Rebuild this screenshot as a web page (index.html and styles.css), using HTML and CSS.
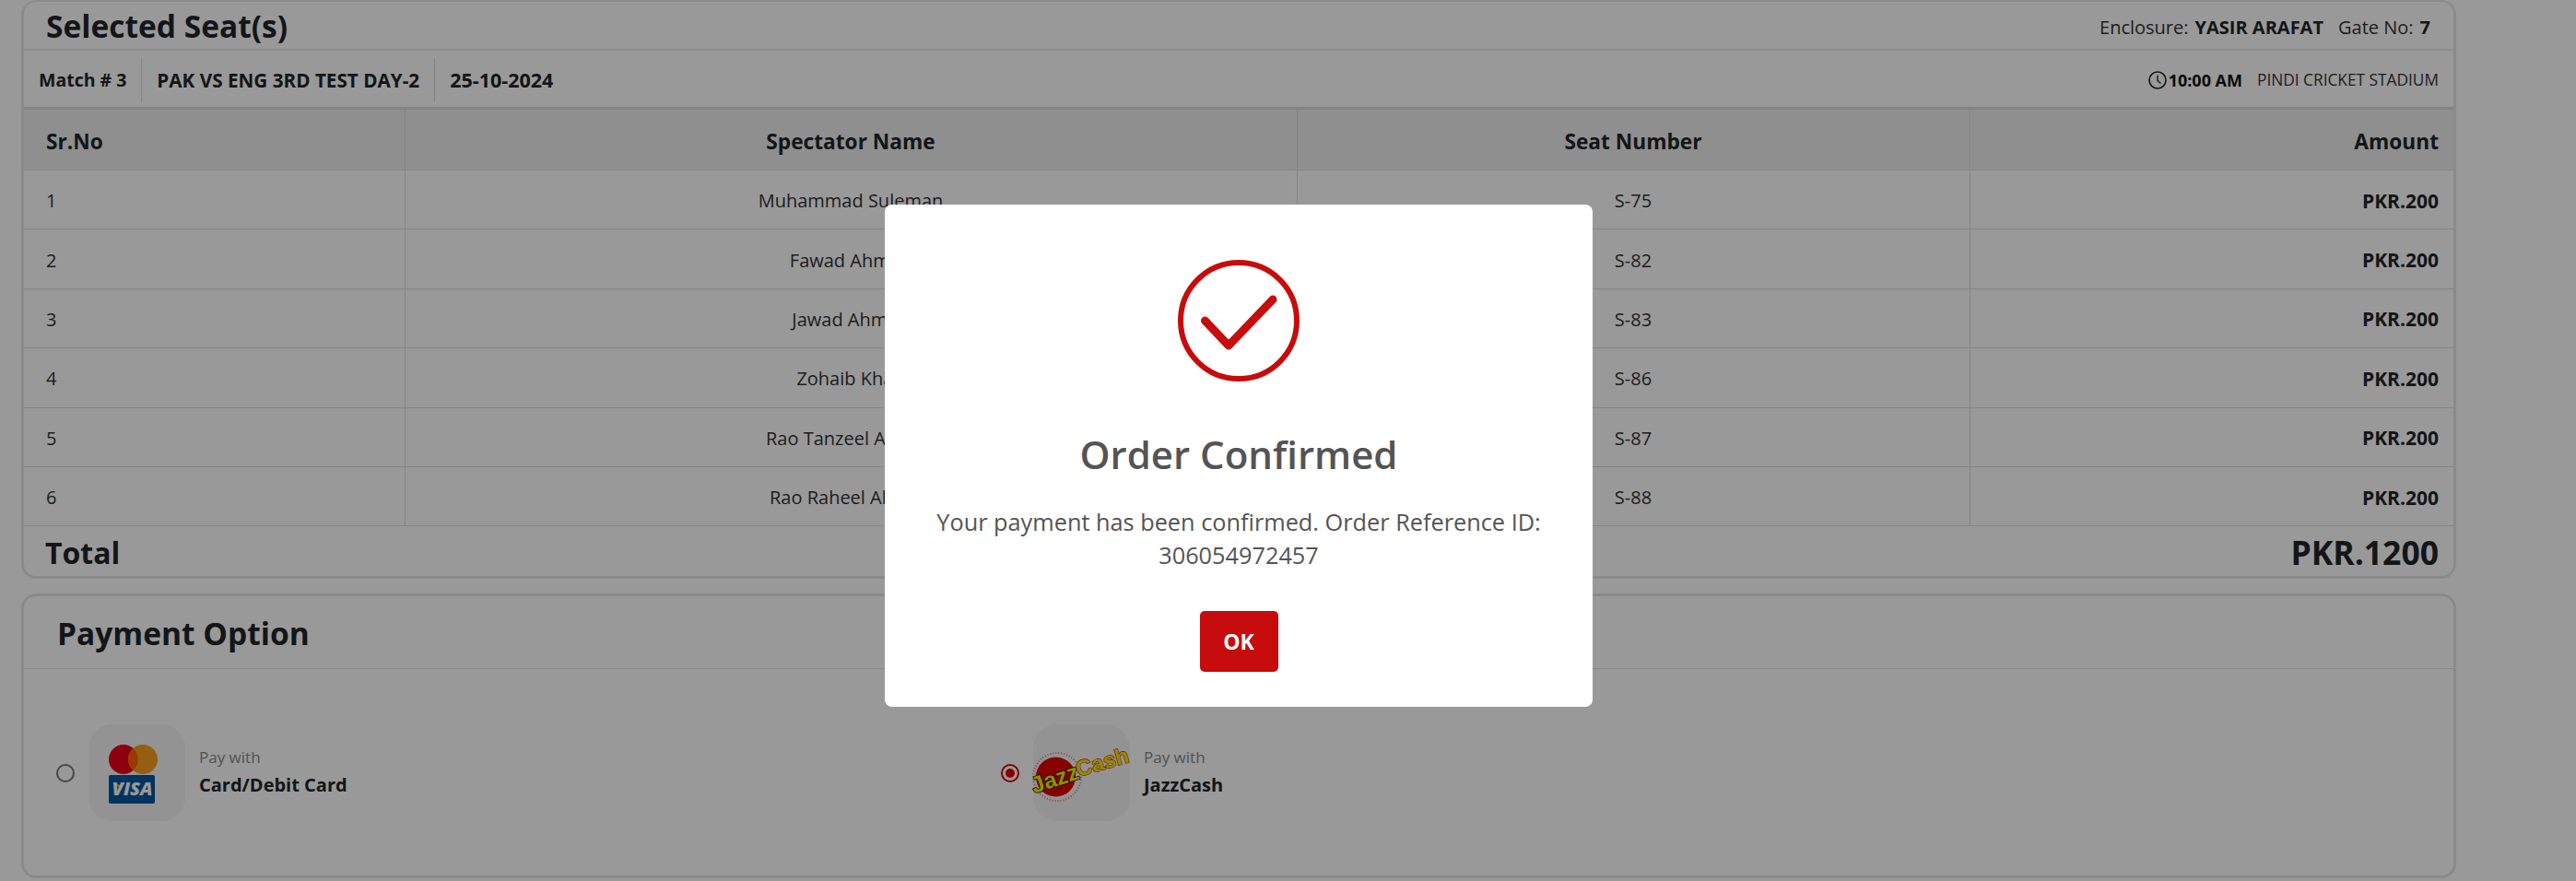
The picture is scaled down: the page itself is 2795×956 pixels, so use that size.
FILE: index.html
```html
<!DOCTYPE html>
<html lang="en">
<head>
<meta charset="utf-8">
<title>Order Confirmed</title>
<link rel="stylesheet" href="styles.css">
</head>
<body>
<main class="page">
  <section class="card seats">
    <header class="seats-head">
      <h2 class="title">Selected Seat(s)</h2>
      <div class="enclosure"><span>Enclosure:</span> <b class="enc-name">YASIR ARAFAT</b><span class="gate">Gate No:</span> <b>7</b></div>
    </header>
    <div class="match-bar">
      <div class="match-left">
        <span class="match-item first">Match # 3</span>
        <span class="match-item">PAK VS ENG 3RD TEST DAY-2</span>
        <span class="match-item last">25-10-2024</span>
      </div>
      <div class="match-right">
        <svg class="clock" viewBox="0 0 20 20" width="20" height="20"><circle cx="10" cy="10" r="9" fill="none" stroke="#222" stroke-width="1.6"/><path d="M10 4.500V10.500L13.500 13.500" fill="none" stroke="#222" stroke-width="1.4"/></svg>
        <b class="time">10:00 AM</b>
        <span class="venue">PINDI CRICKET STADIUM</span>
      </div>
    </div>
    <table class="seat-table">
      <colgroup><col class="c1"><col class="c2"><col class="c3"><col class="c4"></colgroup>
      <thead>
        <tr><th class="left">Sr.No</th><th>Spectator Name</th><th>Seat Number</th><th class="right">Amount</th></tr>
      </thead>
      <tbody>
        <tr><td class="left">1</td><td>Muhammad Suleman</td><td>S-75</td><td class="right amt">PKR.200</td></tr>
        <tr><td class="left">2</td><td>Fawad Ahmed</td><td>S-82</td><td class="right amt">PKR.200</td></tr>
        <tr><td class="left">3</td><td>Jawad Ahmed</td><td>S-83</td><td class="right amt">PKR.200</td></tr>
        <tr><td class="left">4</td><td>Zohaib Khan</td><td>S-86</td><td class="right amt">PKR.200</td></tr>
        <tr><td class="left">5</td><td>Rao Tanzeel Ahmed</td><td>S-87</td><td class="right amt">PKR.200</td></tr>
        <tr><td class="left">6</td><td>Rao Raheel Ahmed</td><td>S-88</td><td class="right amt">PKR.200</td></tr>
      </tbody>
    </table>
    <div class="total"><span class="total-label">Total</span><span class="total-amt">PKR.1200</span></div>
  </section>

  <section class="card payment">
    <h2 class="pay-title">Payment Option</h2>
    <div class="pay-options">
      <label class="option">
        <span class="radio"></span>
        <span class="tile">
          <svg viewBox="0 0 105 105" width="105" height="105">
            <circle cx="38" cy="38" r="16" fill="#eb001b"/>
            <circle cx="59" cy="38" r="16" fill="#f79e1b"/>
            <path d="M48.500 26a16 16 0 0 1 0 24a16 16 0 0 1 0-24z" fill="#ff5f00"/>
            <rect x="22" y="55" width="50" height="31" rx="2" fill="#00579f"/>
            <path d="M27 64l6 1 2 5z" fill="#faa61a"/>
            <text x="47.500" y="77" class="visa" text-anchor="middle">VISA</text>
          </svg>
        </span>
        <span class="opt-text"><span class="pay-with">Pay with</span><b class="opt-name">Card/Debit Card</b></span>
      </label>
      <label class="option">
        <span class="radio on"></span>
        <span class="tile">
          <svg viewBox="0 0 105 105" width="105" height="105">
            <circle cx="26" cy="57" r="26" fill="none" stroke="#ee1c25" stroke-width="2" stroke-dasharray="1 2" opacity=".6"/>
            <circle cx="24.500" cy="57" r="21.500" fill="#e00000"/>
            <text x="0" y="0" class="jazz" transform="translate(1 75) rotate(-18)">Jazz</text>
            <text x="0" y="0" class="cash" transform="translate(49 57) rotate(-16)">Cash</text>
          </svg>
        </span>
        <span class="opt-text"><span class="pay-with">Pay with</span><b class="opt-name">JazzCash</b></span>
      </label>
    </div>
  </section>
</main>

<div class="overlay">
  <div class="modal" role="dialog">
    <svg class="check" viewBox="0 0 132 132" width="132" height="132">
      <circle cx="66" cy="66" r="63" fill="none" stroke="#c60c0c" stroke-width="6"/>
      <path d="M29.500 66L55 93L103 43" fill="none" stroke="#c60c0c" stroke-width="9" stroke-linecap="round" stroke-linejoin="round"/>
    </svg>
    <h1 class="modal-title">Order Confirmed</h1>
    <p class="modal-text">Your payment has been confirmed. Order Reference ID: 306054972457</p>
    <button class="ok" type="button">OK</button>
  </div>
</div>
</body>
</html>
```

FILE: styles.css
```css
* { box-sizing: border-box; }
html, body { margin: 0; padding: 0; height: 956px; overflow: hidden; }
body { background: #fff; font-family: "Open Sans", "Noto Sans", sans-serif; color: #212529; }

.page { width: 2688px; padding: 0 23px; display: flex; flex-direction: column; gap: 16px; }
.card { border: 3px solid #e6e7ea; border-radius: 16px; }
.seats { height: 628px; border-top-width: 2px; display: flex; flex-direction: column; overflow: hidden; }
.payment { height: 309px; }

.seats-head { height: 53px; display: flex; justify-content: space-between; align-items: center; padding: 3px 25px 0 24px; border-bottom: 2px solid #ececec; }
.title { margin: 0; font-size: 33.500px; font-weight: 700; line-height: 1; }
.enclosure { font-size: 20px; color: #333; display: flex; gap: 7px; }
.enclosure b { font-weight: 700; color: #212529; }
.gate { margin-left: 9px; }

.match-bar { height: 64px; display: flex; justify-content: space-between; align-items: center; padding: 2px 16px 0; border-bottom: 3px solid #dcdcdc; }
.match-left { display: flex; align-items: center; }
.match-item { font-size: 20.700px; font-weight: 700; padding: 11px 16px; line-height: 24px; border-right: 1px solid #dcdcdc; }
.match-item.first { padding-left: 0; font-size: 19.500px; }
.match-item.last { border-right: 0; font-size: 21.500px; }
.match-right { display: flex; align-items: center; font-size: 18px; }
.clock { margin-right: 2px; }
.time { font-weight: 700; color: #111; }
.venue { margin-left: 16px; color: #333; font-size: 17.300px; }

.seat-table { width: 100%; border-collapse: collapse; table-layout: fixed; font-size: 20px; }
.c1 { width: 413px; }
.c2 { width: 968px; }
.c3 { width: 730px; }
.seat-table th { height: 65.500px; background: #eee; font-size: 22.700px; font-weight: 700; border: 1px solid #dedede; border-top: 0; padding: 3px 16px 0; text-align: center; }
.seat-table td { height: 64.400px; border: 1px solid #dedede; padding: 2px 16px 0; text-align: center; color: #333; }
.seat-table tr > :first-child { border-left: 0; }
.seat-table tr > :last-child { border-right: 0; }
.seat-table .left { text-align: left; padding-left: 24px; }
.seat-table .right { text-align: right; padding-right: 16px; }
.seat-table .amt { font-weight: 700; font-size: 21px; color: #212529; }

.total { flex: 1; display: flex; justify-content: space-between; align-items: center; padding: 4px 16px 0 23px; font-weight: 700; line-height: 1; }
.total-label { font-size: 32px; }
.total-amt { font-size: 35.500px; }

.pay-title { margin: 0; height: 79px; padding: 2px 36px 0; display: flex; align-items: center; font-size: 33.500px; font-weight: 700; border-bottom: 1px solid #e3e3e3; }
.pay-options { display: grid; grid-template-columns: 1025px 1fr; padding: 60px 35px 0; }
.option { display: flex; align-items: center; }
.radio { width: 20px; height: 20px; border: 2px solid #777; border-radius: 50%; margin-right: 15px; background: #fff; position: relative; }
.radio.on { border-color: #d00; }
.radio.on::after { content: ""; position: absolute; inset: 3px; border-radius: 50%; background: #d00; }
.tile { width: 105px; height: 105px; border-radius: 26px; background: #f5f5f5; display: block; margin-right: 15px; }
.tile svg { display: block; overflow: visible; }
.opt-text { display: flex; flex-direction: column; gap: 4px; margin-top: -2px; }
.pay-with { font-size: 17px; color: #888; line-height: 24px; }
.opt-name { font-size: 20px; font-weight: 700; line-height: 28px; }
.visa { font-family: "Open Sans", sans-serif; font-size: 20px; font-weight: 800; font-style: italic; fill: #fff; }
.jazz { font-family: "Liberation Sans", sans-serif; font-size: 25px; font-weight: 700; fill: #f4ec00; stroke: #111; stroke-width: 1.600px; paint-order: stroke; }
.cash { font-family: "Liberation Sans", sans-serif; font-size: 24px; font-weight: 700; fill: #f4ec00; stroke: #d10a0f; stroke-width: 1.200px; paint-order: stroke; }

.overlay { position: fixed; inset: 0; background: rgba(0,0,0,.4); padding: 222px 0 0 960px; }
.modal { width: 768px; height: 545px; background: #fff; border-radius: 8px; display: flex; flex-direction: column; align-items: center; padding-top: 60px; color: #545454; }
.check { display: block; flex: none; }
.modal-title { margin: 50px 0 0; font-size: 42px; font-weight: 600; line-height: 57px; }
.modal-text { margin: 27px 0 0; width: 690px; text-align: center; font-size: 25.300px; line-height: 36px; }
.ok { margin-top: 43px; width: 85px; height: 66px; border: 0; border-radius: 5px; background: #c60c0c; color: #fff; font: 700 23px "Open Sans", sans-serif; padding: 0; }
```
